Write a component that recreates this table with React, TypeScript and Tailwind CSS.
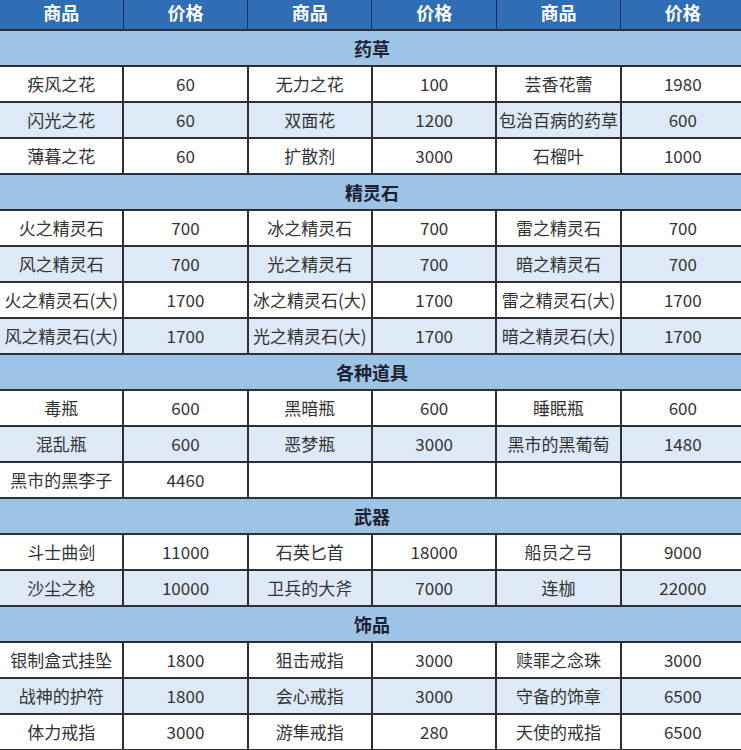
import React from "react"

type Item = [string, string]

const sections: { title: string; rows: Item[][] }[] = [
  {
    title: "药草",
    rows: [
      [["疾风之花", "60"], ["无力之花", "100"], ["芸香花蕾", "1980"]],
      [["闪光之花", "60"], ["双面花", "1200"], ["包治百病的药草", "600"]],
      [["薄暮之花", "60"], ["扩散剂", "3000"], ["石榴叶", "1000"]],
    ],
  },
  {
    title: "精灵石",
    rows: [
      [["火之精灵石", "700"], ["冰之精灵石", "700"], ["雷之精灵石", "700"]],
      [["风之精灵石", "700"], ["光之精灵石", "700"], ["暗之精灵石", "700"]],
      [["火之精灵石(大)", "1700"], ["冰之精灵石(大)", "1700"], ["雷之精灵石(大)", "1700"]],
      [["风之精灵石(大)", "1700"], ["光之精灵石(大)", "1700"], ["暗之精灵石(大)", "1700"]],
    ],
  },
  {
    title: "各种道具",
    rows: [
      [["毒瓶", "600"], ["黑暗瓶", "600"], ["睡眠瓶", "600"]],
      [["混乱瓶", "600"], ["恶梦瓶", "3000"], ["黑市的黑葡萄", "1480"]],
      [["黑市的黑李子", "4460"], ["", ""], ["", ""]],
    ],
  },
  {
    title: "武器",
    rows: [
      [["斗士曲剑", "11000"], ["石英匕首", "18000"], ["船员之弓", "9000"]],
      [["沙尘之枪", "10000"], ["卫兵的大斧", "7000"], ["连枷", "22000"]],
    ],
  },
  {
    title: "饰品",
    rows: [
      [["银制盒式挂坠", "1800"], ["狙击戒指", "3000"], ["赎罪之念珠", "3000"]],
      [["战神的护符", "1800"], ["会心戒指", "3000"], ["守备的饰章", "6500"]],
      [["体力戒指", "3000"], ["游隼戒指", "280"], ["天使的戒指", "6500"]],
    ],
  },
]

const font = { fontFamily: '"Microsoft YaHei", "Noto Sans CJK SC", "Noto Sans", sans-serif' }

export default function App() {
  return (
    <div className="w-[741px] h-[750px] overflow-hidden bg-white" style={font}>
      <table className="-ml-[2px] w-[748px] table-fixed border-collapse">
        <thead>
          <tr className="h-[30px] bg-[#2f6db4]">
            {["商品", "价格", "商品", "价格", "商品", "价格"].map((h, i) => (
              <th
                key={i}
                className="border-x border-[#1b2d5c] pb-[5px] text-center align-middle text-[18px] font-bold leading-none text-white"
              >
                {h}
              </th>
            ))}
          </tr>
        </thead>
        <tbody>
          {sections.map((s) => (
            <React.Fragment key={s.title}>
              <tr className="h-[36px] bg-[#9dc3e6]">
                <td
                  colSpan={6}
                  className="border-y-2 border-[#2a2f3a] text-center text-[18px] font-bold text-[#1d2230]"
                >
                  {s.title}
                </td>
              </tr>
              {s.rows.map((row, ri) => (
                <tr key={ri} className={`h-[36px] ${ri % 2 === 1 ? "bg-[#dde9f6]" : "bg-white"}`}>
                  {row.flatMap((item, ci) => [
                    <td
                      key={`n${ci}`}
                      className="whitespace-nowrap border-2 border-[#2a2f3a] px-0 text-center text-[17px] text-[#333]"
                    >
                      {item[0]}
                    </td>,
                    <td
                      key={`p${ci}`}
                      className="border-2 border-[#2a2f3a] text-center text-[17px] text-[#333]"
                    >
                      {item[1]}
                    </td>,
                  ])}
                </tr>
              ))}
            </React.Fragment>
          ))}
        </tbody>
      </table>
    </div>
  )
}
